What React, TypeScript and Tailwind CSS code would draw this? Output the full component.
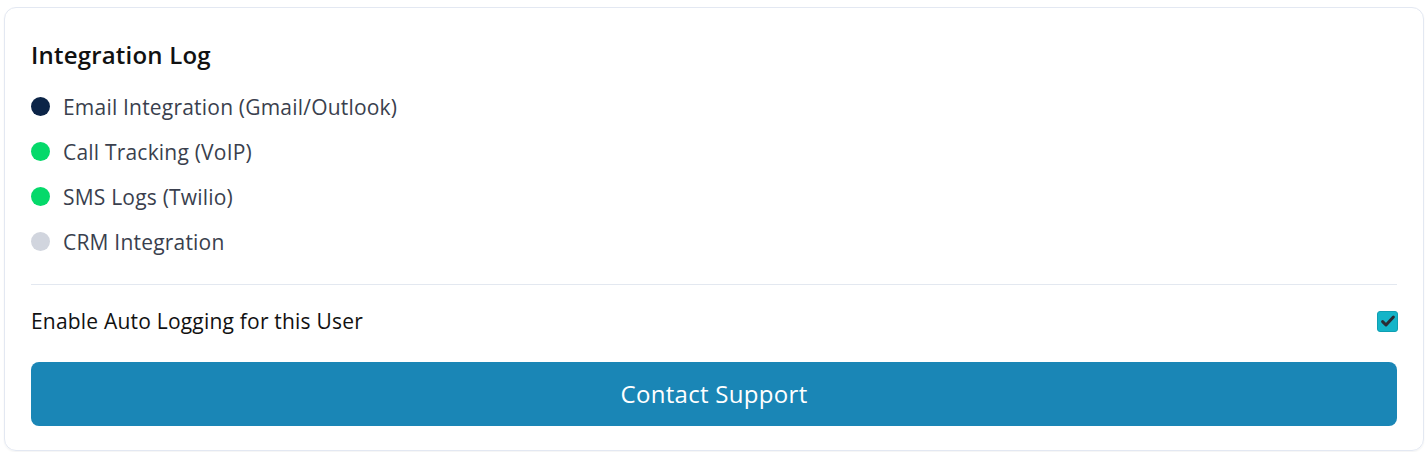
import React from "react";

const items = [
  { label: "Email Integration (Gmail/Outlook)", color: "bg-[#0b2447]" },
  { label: "Call Tracking (VoIP)", color: "bg-[#05d96a]" },
  { label: "SMS Logs (Twilio)", color: "bg-[#05d96a]" },
  { label: "CRM Integration", color: "bg-[#d1d5de]" },
];

export default function App() {
  return (
    <div className="w-[1428px] h-[452px] bg-white pt-[7px] px-[4px] pb-[1px] font-['Open_Sans',sans-serif]">
      <div className="h-[444px] rounded-[12px] border border-[#e3e8f2] px-[26px] pt-[33px] shadow-[0_1px_2px_rgba(0,0,0,0.05)]">
        <h2 className="text-[24px] leading-[28px] font-semibold text-[#111111] tracking-[0.2px]">
          Integration Log
        </h2>
        <ul className="mt-[15px] flex flex-col">
          {items.map((it) => (
            <li key={it.label} className="h-[45px] flex items-center gap-[13px]">
              <span className={`w-[19px] h-[19px] rounded-full shrink-0 ${it.color}`} />
              <span className="text-[21px] leading-[28px] text-[#3a3f4e] tracking-[0.2px]">
                {it.label}
              </span>
            </li>
          ))}
        </ul>
        <div className="mt-[20px] h-px bg-[#e3e8f0]" />
        <div className="mt-[22px] h-[28px] flex items-center justify-between">
          <span className="text-[21px] leading-[28px] text-[#111111] tracking-[0.2px]">
            Enable Auto Logging for this User
          </span>
          <span className="w-[21px] h-[21px] rounded-[3px] bg-[#14b4c8] border border-[#0f9fb2] flex items-center justify-center mr-[-1px]">
            <svg width="16" height="16" viewBox="0 0 16 16" fill="none">
              <path d="M2.6 8.6 L6 12 L13.4 4" stroke="#2c2c34" strokeWidth="3" strokeLinecap="round" strokeLinejoin="round" />
            </svg>
          </span>
        </div>
        <button className="mt-[27px] w-full h-[64px] rounded-[8px] bg-[#1a86b6] text-white text-[24px] leading-[32px] tracking-[0.3px]">
          Contact Support
        </button>
      </div>
    </div>
  );
}
